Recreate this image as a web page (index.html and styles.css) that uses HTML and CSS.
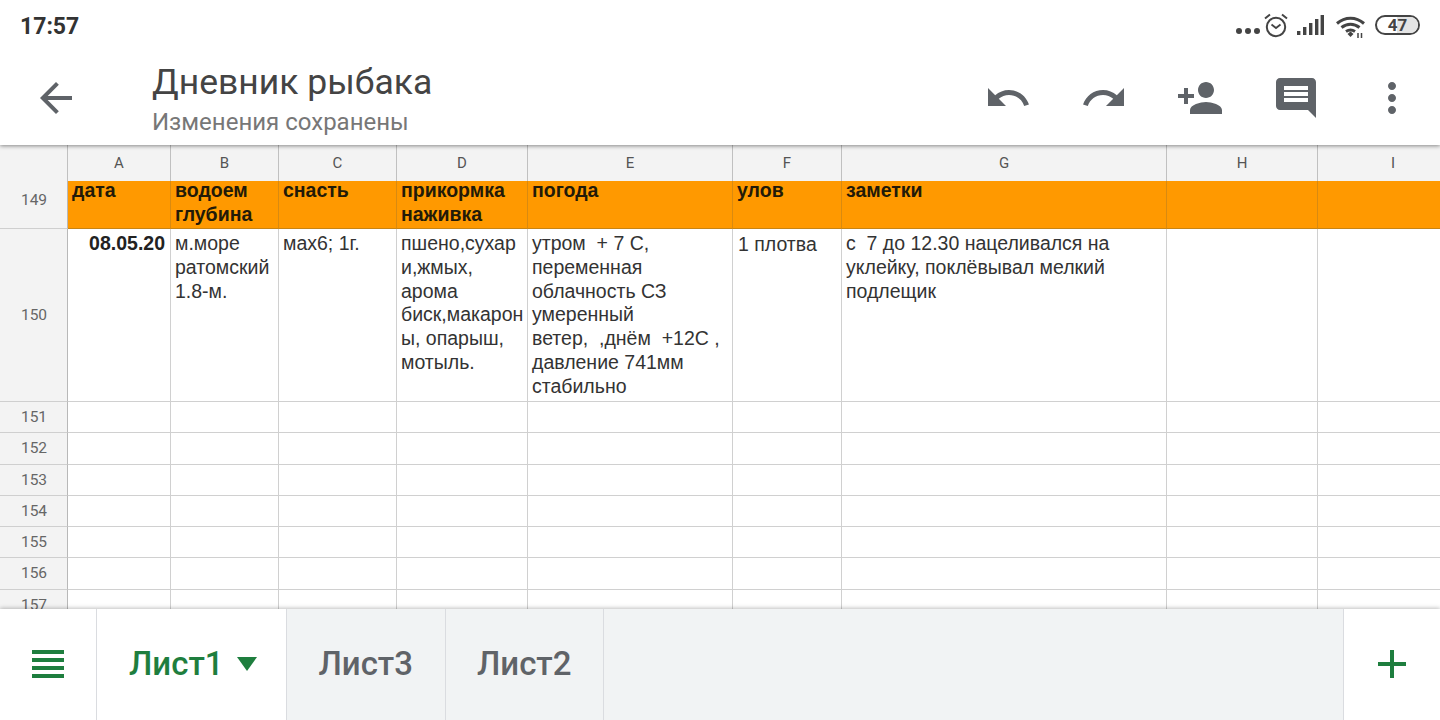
FILE: index.html
```html
<!DOCTYPE html>
<html lang="ru">
<head>
<meta charset="utf-8">
<title>Дневник рыбака</title>
<link rel="stylesheet" href="styles.css">
</head>
<body>
<div class="app">
  <header class="top">
    <div class="status">
      <span class="clock">17:57</span>
      <div class="status-icons">
        <svg class="si-dots" viewBox="0 0 24 6" width="24" height="6"><circle cx="3" cy="3" r="3"/><circle cx="12" cy="3" r="3"/><circle cx="21" cy="3" r="3"/></svg>
        <svg class="si-alarm" viewBox="0 0 24 25" width="24" height="25"><circle cx="12" cy="14" r="9.2" fill="none" stroke="#444" stroke-width="2"/><path d="M7.500 11.500L12 15L16.500 11.500" fill="none" stroke="#444" stroke-width="1.800"/><path d="M1 5.500L6 1.500M23 5.500L18 1.500" stroke="#444" stroke-width="2" fill="none"/></svg>
        <svg class="si-signal" viewBox="0 0 27 20" width="27" height="20"><rect x="0" y="16" width="3.400" height="4"/><rect x="6" y="12" width="3.400" height="8"/><rect x="12" y="8" width="3.400" height="12"/><rect x="18" y="4" width="3.400" height="16"/><rect x="23.600" y="0" width="3.400" height="20"/></svg>
        <svg class="si-wifi" viewBox="0 0 30 22" width="30" height="22"><path d="M1 7.500C9 .5 20 .5 28 7.500M5.500 11.500C11 7 18 7 23.500 11.500M10 15.500C13 13.500 16 13.500 19 15.500" fill="none" stroke="#444" stroke-width="3"/><path d="M11.500 18L14.500 15.500L17.500 18L14.500 21Z"/><path d="M22 17V22M25.500 17V22" stroke="#444" stroke-width="1.500"/></svg>
        <div class="battery"><span class="battery-fill"></span><span class="battery-num">47</span></div>
      </div>
    </div>
    <div class="appbar">
      <svg class="back" viewBox="0 0 24 24" width="48" height="48"><path d="M20 11H7.830l5.590-5.590L12 4l-8 8 8 8 1.410-1.410L7.830 13H20v-2z"/></svg>
      <div class="doc">
        <div class="doc-title">Дневник рыбака</div>
        <div class="doc-sub">Изменения сохранены</div>
      </div>
      <div class="actions">
        <svg viewBox="0 0 24 24" width="48" height="48"><path d="M12.500 8c-2.650 0-5.050.99-6.900 2.600L2 7v9h9l-3.620-3.620c1.390-1.160 3.160-1.880 5.120-1.880 3.540 0 6.550 2.310 7.600 5.500l2.370-.78C21.080 11.030 17.150 8 12.500 8z"/></svg>
        <svg viewBox="0 0 24 24" width="48" height="48"><path d="M18.400 10.600C16.550 8.990 14.150 8 11.500 8c-4.650 0-8.580 3.030-9.970 7.220L3.900 16c1.050-3.190 4.050-5.500 7.600-5.500 1.950 0 3.730.72 5.120 1.880L13 16h9V7l-3.600 3.600z"/></svg>
        <svg viewBox="0 0 24 24" width="48" height="48"><path d="M15 12c2.210 0 4-1.790 4-4s-1.790-4-4-4-4 1.790-4 4 1.790 4 4 4zm-9-2V7H4v3H1v2h3v3h2v-3h3v-2H6zm9 4c-2.670 0-8 1.340-8 4v2h16v-2c0-2.660-5.330-4-8-4z"/></svg>
        <svg viewBox="0 0 24 24" width="48" height="48"><path d="M21.990 4c0-1.100-.89-2-1.990-2H4c-1.100 0-2 .9-2 2v12c0 1.100.9 2 2 2h14l4 4-.01-18zM18 14H6v-2h12v2zm0-3H6V9h12v2zm0-3H6V6h12v2z"/></svg>
        <svg viewBox="0 0 24 24" width="48" height="48"><path d="M12 8c1.100 0 2-.9 2-2s-.9-2-2-2-2 .9-2 2 .9 2 2 2zm0 2c-1.100 0-2 .9-2 2s.9 2 2 2 2-.9 2-2-.9-2-2-2zm0 6c-1.100 0-2 .9-2 2s.9 2 2 2 2-.9 2-2-.9-2-2-2z"/></svg>
      </div>
    </div>
  </header>

  <main class="sheet">
    <div class="ch corner"></div><div class="ch">A</div><div class="ch">B</div><div class="ch">C</div><div class="ch">D</div><div class="ch">E</div><div class="ch">F</div><div class="ch">G</div><div class="ch">H</div><div class="ch last">I</div>

    <div class="rh rh-head">149</div>
    <div class="hc"><div class="ht">дата</div></div>
    <div class="hc"><div class="ht">водоем<br>глубина</div></div>
    <div class="hc"><div class="ht">снасть</div></div>
    <div class="hc"><div class="ht">прикормка<br>наживка</div></div>
    <div class="hc"><div class="ht">погода</div></div>
    <div class="hc"><div class="ht">улов</div></div>
    <div class="hc"><div class="ht">заметки</div></div>
    <div class="hc"></div>
    <div class="hc last"></div>

    <div class="rh">150</div>
    <div class="c date">08.05.20</div>
    <div class="c">м.море<br>ратомский<br>1.8-м.</div>
    <div class="c">мах6; 1г.</div>
    <div class="c">пшено,сухар<br>и,жмых,<br>арома<br>биск,макарон<br>ы, опарыш,<br>мотыль.</div>
    <div class="c">утром  + 7 С,<br>переменная<br>облачность СЗ<br>умеренный<br>ветер,  ,днём  +12С ,<br>давление 741мм<br>стабильно</div>
    <div class="c low">1 плотва</div>
    <div class="c">с  7 до 12.30 нацеливался на<br>уклейку, поклёвывал мелкий<br>подлещик</div>
    <div class="c"></div>
    <div class="c last"></div>

    <div class="rh">151</div><div class="c"></div><div class="c"></div><div class="c"></div><div class="c"></div><div class="c"></div><div class="c"></div><div class="c"></div><div class="c"></div><div class="c last"></div>
    <div class="rh">152</div><div class="c"></div><div class="c"></div><div class="c"></div><div class="c"></div><div class="c"></div><div class="c"></div><div class="c"></div><div class="c"></div><div class="c last"></div>
    <div class="rh">153</div><div class="c"></div><div class="c"></div><div class="c"></div><div class="c"></div><div class="c"></div><div class="c"></div><div class="c"></div><div class="c"></div><div class="c last"></div>
    <div class="rh">154</div><div class="c"></div><div class="c"></div><div class="c"></div><div class="c"></div><div class="c"></div><div class="c"></div><div class="c"></div><div class="c"></div><div class="c last"></div>
    <div class="rh">155</div><div class="c"></div><div class="c"></div><div class="c"></div><div class="c"></div><div class="c"></div><div class="c"></div><div class="c"></div><div class="c"></div><div class="c last"></div>
    <div class="rh">156</div><div class="c"></div><div class="c"></div><div class="c"></div><div class="c"></div><div class="c"></div><div class="c"></div><div class="c"></div><div class="c"></div><div class="c last"></div>
    <div class="rh">157</div><div class="c"></div><div class="c"></div><div class="c"></div><div class="c"></div><div class="c"></div><div class="c"></div><div class="c"></div><div class="c"></div><div class="c last"></div>
  </main>

  <footer class="tabs">
    <div class="menu"><span></span><span></span><span></span><span></span></div>
    <div class="tab active">Лист1<i class="caret"></i></div>
    <div class="tab">Лист3</div>
    <div class="tab">Лист2</div>
    <div class="tab-space"></div>
    <div class="add"><span class="plus"></span></div>
  </footer>
</div>
</body>
</html>
```
FILE: styles.css
```css
* { box-sizing: border-box; }
html, body { margin: 0; padding: 0; height: 100%; overflow: hidden; background: #fff; }
.app { width: 1440px; height: 720px; display: flex; flex-direction: column; overflow: hidden; font-family: Roboto, "Liberation Sans", sans-serif; }

.top { height: 145px; flex: none; background: #fff; position: relative; z-index: 2; box-shadow: 0 1px 4px rgba(0,0,0,.45); }
.status { height: 50px; padding: 0 20px; display: flex; align-items: flex-start; justify-content: space-between; }
.clock { font-size: 23px; font-weight: 700; line-height: 28px; margin-top: 13px; color: #333; }
.status-icons { display: flex; align-items: flex-start; }
.status-icons svg { fill: #444; flex: none; }
.si-dots { margin-top: 28px; }
.si-alarm { margin-top: 13px; margin-left: 4px; }
.si-signal { margin-top: 15px; margin-left: 9px; }
.si-wifi { margin-top: 16px; margin-left: 12px; }
.battery { position: relative; width: 45px; height: 20px; margin: 15px 0 0 9px; border: 2px solid #444; border-radius: 10px; overflow: hidden; text-align: center; font-size: 17px; font-weight: 700; line-height: 16px; color: #444; }
.battery-fill { position: absolute; top: 0; bottom: 0; left: 20px; right: 0; background: #e4e4e4; }
.battery-num { position: relative; }

.appbar { height: 95px; display: flex; align-items: flex-start; }
.back { fill: #5f6368; margin: 24px 0 0 32px; flex: none; }
.doc { margin: 10px 0 0 72px; }
.doc-title { font-size: 35.500px; line-height: 44px; color: #444; }
.doc-sub { font-size: 24px; line-height: 30px; margin-top: 3px; color: #777; }
.actions { margin-left: auto; margin-top: 24px; padding-right: 24px; display: flex; gap: 48px; }
.actions svg { fill: #5f6368; flex: none; }

.sheet { flex: 1; min-height: 0; overflow: hidden; display: grid; grid-template-columns: 68px 103px 108px 118px 131px 205px 109px 325px 151px 150px; grid-template-rows: 36px 48px 173px 31px 32px 31px 31px 31px 32px 32px; font-family: "Liberation Sans", Arial, sans-serif; }
.ch { background: #f3f3f3; border-right: 1px solid #c0c0c0; font-family: Roboto, sans-serif; font-size: 15px; line-height: 36px; text-align: center; color: #555; }
.rh { background: #f3f3f3; border-right: 1px solid #b8b8b8; border-bottom: 1px solid #cfcfcf; font-family: Roboto, sans-serif; font-size: 15.500px; color: #666; display: flex; align-items: center; justify-content: center; padding: 0 0 1px 1px; }
.rh-head { padding-bottom: 9px; }
.hc { background: #ff9900; border-right: 1px solid #d98a10; border-bottom: 1px solid #c78414; font-size: 19.500px; font-weight: 700; color: #221a08; line-height: 24px; padding-left: 4px; }
.ht { margin-top: -3px; }
.c { background: #fff; border-right: 1px solid #d0d0d0; border-bottom: 1px solid #d0d0d0; font-size: 19.500px; line-height: 23.800px; color: #333; padding: 3px 0 0 4px; white-space: pre; overflow: hidden; }
.date { text-align: right; padding: 3px 5px 0 0; font-weight: 700; color: #222; }
.low { padding: 4px 0 0 5px; }
.last { border-right: 0; }

.tabs { height: 111px; flex: none; display: flex; background: #f1f3f4; position: relative; z-index: 2; box-shadow: 0 -1px 4px rgba(0,0,0,.25); }
.menu { width: 97px; background: #fff; border-right: 1px solid #dadce0; padding: 41px 0 0 32px; }
.menu span { display: block; width: 32px; height: 4px; margin-bottom: 4px; background: #1e7e3e; }
.tab { width: 158.500px; border-right: 1px solid #dadce0; display: flex; align-items: center; justify-content: center; font-size: 33px; font-weight: 500; color: #5f6368; padding-bottom: 2px; }
.tab.active { width: 190px; background: #fff; color: #1e7e3e; justify-content: flex-start; padding-left: 32px; }
.caret { width: 0; height: 0; margin: 0 0 0 13px; border-left: 10px solid transparent; border-right: 10px solid transparent; border-top: 14px solid #1e7e3e; }
.tab-space { flex: 1; }
.add { width: 97px; background: #fff; border-left: 1px solid #dadce0; display: flex; align-items: center; justify-content: center; padding-bottom: 1px; }
.plus { position: relative; width: 28px; height: 4px; background: #1e7e3e; }
.plus::after { content: ""; position: absolute; left: 12px; top: -12px; width: 4px; height: 28px; background: #1e7e3e; }
```
